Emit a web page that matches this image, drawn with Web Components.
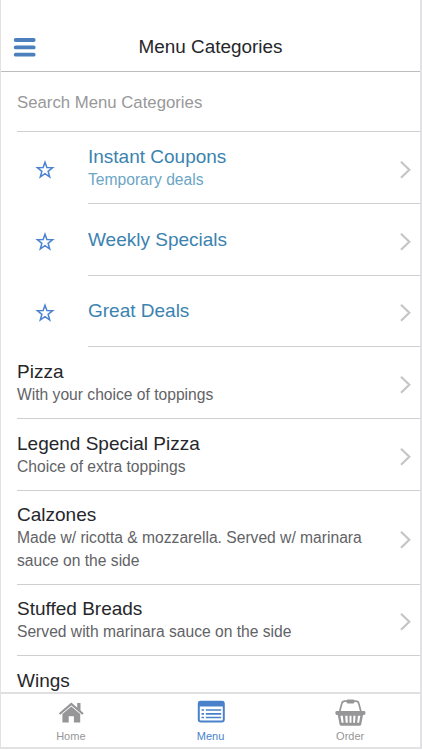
<!DOCTYPE html>
<html lang="en"><head><meta charset="utf-8"><title>Menu Categories</title>
<style>html,body{margin:0;height:100%;overflow:hidden;background:#fff}body{font-family:"Liberation Sans",Arial,sans-serif;color:#26272b}</style></head>
<body>
<menu-app>
<app-header slot="header">Menu Categories</app-header>
<search-field>Search Menu Categories</search-field>
<category-row star style="--h:72px;--top:13px">Instant Coupons<span slot="note">Temporary deals</span></category-row>
<category-row star single style="--h:72px;--top:24px">Weekly Specials</category-row>
<category-row star single style="--h:71px;--top:23px">Great Deals</category-row>
<category-row style="--h:72px;--top:13px">Pizza<span slot="note">With your choice of toppings</span></category-row>
<category-row style="--h:72px;--top:13px">Legend Special Pizza<span slot="note">Choice of extra toppings</span></category-row>
<category-row style="--h:94px">Calzones<span slot="note">Made w/ ricotta &amp; mozzarella. Served w/ marinara<br>sauce on the side</span></category-row>
<category-row style="--h:71px">Stuffed Breads<span slot="note">Served with marinara sauce on the side</span></category-row>
<category-row plain style="--h:72px;--top:13px">Wings</category-row>
<tab-bar slot="footer">
<tab-item icon="home">Home</tab-item><tab-item icon="menu" active>Menu</tab-item><tab-item icon="order">Order</tab-item>
</tab-bar>
</menu-app>
<script>
const define=(name,render)=>customElements.define(name,class extends HTMLElement{
  constructor(){super();this.attachShadow({mode:'open'}).innerHTML=render(this)}
});
define('menu-app',()=>`<style>
:host{display:flex;flex-direction:column;box-sizing:border-box;width:422px;height:749px;border:solid #e2e2e4;border-width:0 2px 2px 1px;background:#fff}
main{flex:1;min-height:0;overflow:hidden}
</style><slot name="header"></slot><main><slot></slot></main><slot name="footer"></slot>`);
define('app-header',()=>`<style>
:host{display:grid;grid-template-columns:50px 1fr 50px;align-items:center;height:72px;flex:none;box-sizing:border-box;padding-top:22px;border-bottom:1px solid #bdbdbe}
svg{margin:2px 0 0 12px;display:block}h1{margin:0;font:400 18.9px/24px "Liberation Sans",Arial,sans-serif;text-align:center;white-space:nowrap}
</style><svg width="24" height="22" viewBox="0 0 24 22"><path d="M2.7 3H20.7M2.7 10.4H20.7M2.7 17.7H20.7" stroke="#4b80bd" stroke-width="3.8" stroke-linecap="round"/></svg><h1><slot></slot></h1>`);
define('search-field',()=>`<style>
:host{display:flex;align-items:center;box-sizing:border-box;height:60px;padding-top:2px;margin-left:16px;border-bottom:1px solid #cfcfd0;font-size:16.75px;color:#98989a}
</style><slot></slot>`);
define('category-row',el=>`<style>
:host{display:flex;height:var(--h);margin-left:16px}
.star{width:71px;flex:none;display:flex;align-items:center}
.star svg{margin:3px 0 0 17px}
.body{flex:1;min-width:0;display:flex;align-items:center;justify-content:space-between;box-sizing:border-box;border-bottom:1px solid #cfcfd0}
.text{align-self:flex-start;padding-top:var(--top,12px);white-space:nowrap}
.title{font-size:19px;line-height:24px}
.note{font-size:15.63px;line-height:22.5px;color:#626366}
:host([star]) .title{color:#3b83af}:host([star]) .note{color:#6ba5c6}
.go{margin:4px 9px 0 0;flex:none}
</style>${el.hasAttribute('star')?`<div class="star"><svg width="22" height="22" viewBox="0 0 22 22"><path d="M11 3.2 12.9 8.6 18.6 8.8 14.1 12.3 15.7 17.9 11 14.6 6.3 17.9 7.9 12.3 3.4 8.8 9.1 8.6Z" fill="none" stroke="#4a82cf" stroke-width="1.5"/></svg></div>`:''}
<div class="body"><div class="text"><div class="title"><slot></slot></div><div class="note"><slot name="note"></slot></div></div>${el.hasAttribute('plain')?'':'<svg class="go" width="12" height="20" viewBox="0 0 12 20"><path d="M2 1.7 10.3 9.7 2 17.7" fill="none" stroke="#c5c5c8" stroke-width="2.2"/></svg>'}</div>`);
define('tab-bar',()=>`<style>:host{display:flex;flex:none;height:55px;box-sizing:border-box;border-top:2px solid #e0e0e2;background:#fff}</style><slot></slot>`);
const icons={
home:`<path d="M4.6 15 16.3 5 28 15" fill="none" stroke="currentColor" stroke-width="2.3"/><path d="M22.2 4H25.5V12L22.2 9.2Z"/><path d="M7.4 14.9 16.3 7.5 25.2 14.9V23.6H18.9V17.2H13.7V23.6H7.4Z"/>`,
menu:`<rect x="3.8" y="2.7" width="25" height="19.8" rx="2" fill="none" stroke="currentColor" stroke-width="2"/><path d="M3.5 2.5H29V7.5H3.5Z"/><path d="M6.5 11H9M6.5 14.8H9M6.5 18.5H9M10.8 11H26.2M10.8 14.8H26.2M10.8 18.5H26.2" stroke="currentColor" stroke-width="1.7"/>`,
order:`<path d="M5.5 13.3 7.7 4.8Q8.3 2.2 10.8 2.2H21.8Q24.3 2.2 24.9 4.8L27.1 13.3" fill="none" stroke="currentColor" stroke-width="1.7"/><rect x="12.7" y="0.5" width="7.6" height="4" rx="1.2"/><rect x="1.4" y="12" width="30" height="3.9" rx="1.4"/><path fill-rule="evenodd" d="M3.7 15.5H29.1L27.2 25.4Q26.9 26.8 25.4 26.8H7.4Q5.9 26.8 5.6 25.4ZM6.4 16.8 7.6 23.8H9.6L8.8 16.8ZM11.2 16.8 11.7 23.8H13.8L13.5 16.8ZM15.5 16.8V23.8H17.5V16.8ZM19.4 16.8 19.1 23.8H21L21.5 16.8ZM24 16.8 23.2 23.8H25.1L26.3 16.8Z"/>`};
define('tab-item',el=>`<style>
:host{flex:1;display:flex;flex-direction:column;align-items:center;padding-top:5px;color:#969698;font-size:11px;line-height:14px}
:host([active]){color:#4982ca}svg{display:block;margin-bottom:3px}
</style><svg width="32" height="27" viewBox="0 0 32 27" fill="currentColor">${icons[el.getAttribute('icon')]}</svg><span><slot></slot></span>`);
</script></body></html>
